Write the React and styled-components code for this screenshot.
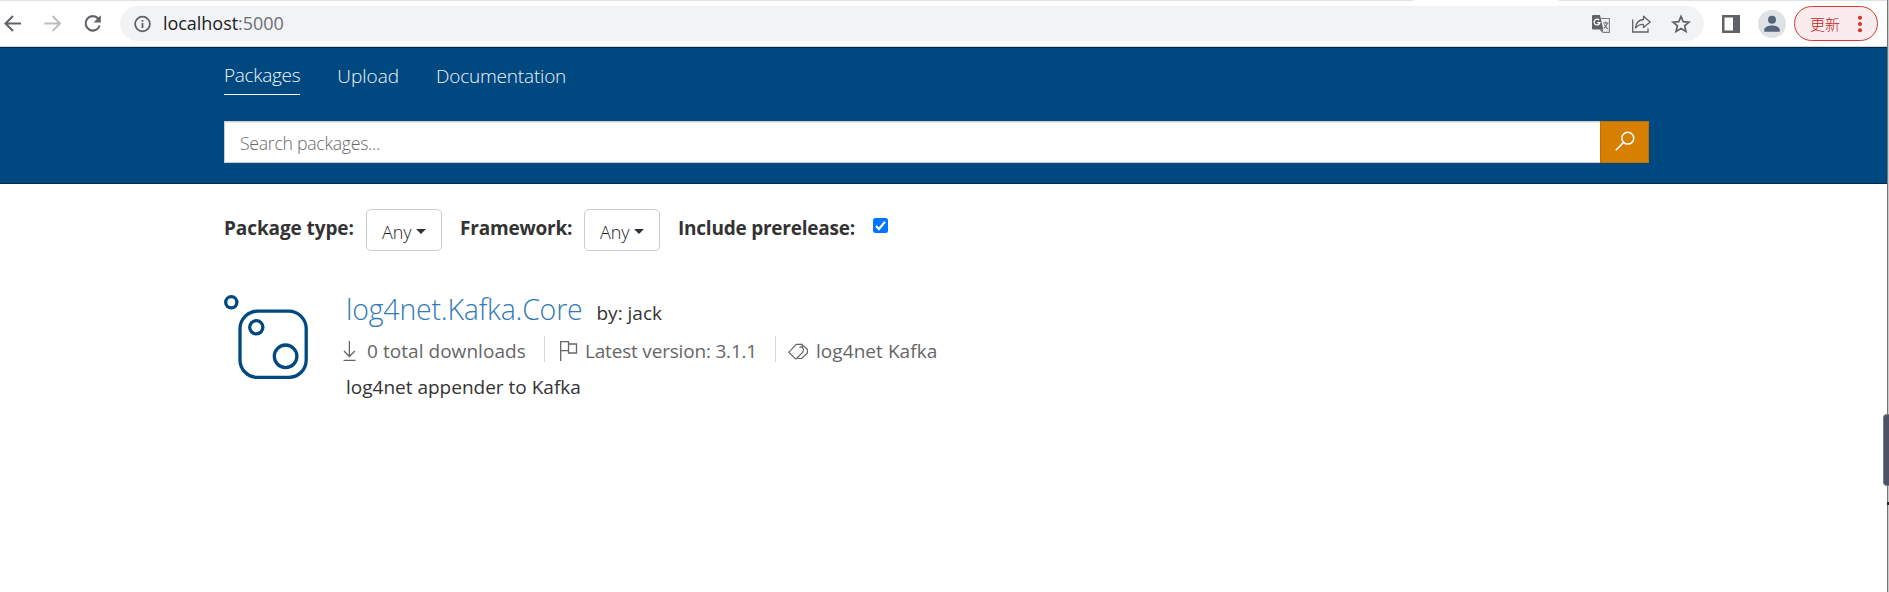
import React from 'react';
import styled, { createGlobalStyle } from 'styled-components';

const Global = createGlobalStyle`
  *, *::before, *::after { box-sizing: border-box; }
  html, body { margin: 0; padding: 0; background: #fff; }
  body { font-family: "Open Sans", "Noto Sans CJK SC", sans-serif; color: #333; overflow: hidden; }
  svg { display: block; flex: none; }
`;

const Window = styled.div`
  display: grid;
  grid-template-columns: 1fr 2px;
  width: 1889px;
  height: 592px;
`;
const View = styled.div`
  display: flex;
  flex-direction: column;
  min-width: 0;
`;
const Edge = styled.div`
  position: relative;
  background: #cacaca;
  border-left: 1px solid #747474;
`;
const Handle = styled.div`
  position: absolute;
  right: 0;
  top: 414px;
  width: 6px;
  height: 72px;
  border: 1px solid #777d88;
  border-right: 0;
  border-radius: 4px 0 0 4px;
  background: #4b5365;
`;
const Mark = styled.div`
  position: absolute;
  right: 0;
  top: 502px;
  width: 2px;
  height: 3px;
  background: #222;
`;

/* Browser chrome */
const TabStrip = styled.div`
  display: flex;
  justify-content: space-between;
  height: 1px;
`;
const TabEdge = styled.div`
  width: ${(p) => p.$width}px;
  background: #dee1e6;
`;
const Toolbar = styled.div`
  display: flex;
  align-items: center;
  height: 46px;
  padding: 0 9px 0 2px;
  border-bottom: 1px solid #d5d5d5;
`;
const NavButtons = styled.div`
  display: flex;
  gap: 20px;
  width: 118px;
`;
const AddressBar = styled.div`
  display: flex;
  align-items: center;
  width: 1584px;
  height: 35px;
  padding: 0 13px 0 12px;
  border-radius: 18px;
  background: #f1f3f4;
`;
const Url = styled.div`
  flex: 1;
  margin-left: 10px;
  font-size: 18px;
  line-height: 33px;
  padding-bottom: 1px;
  letter-spacing: -0.04px;
  color: #202124;
  span { color: #6b6f74; }
`;
const BarIcons = styled.div`
  display: flex;
  gap: 20px;
`;
const PanelButton = styled.div`
  margin-left: 18px;
`;
const Avatar = styled.div`
  margin-left: 18px;
  width: 28px;
  height: 28px;
  border-radius: 50%;
  background: #dee1e6;
`;
const UpdateButton = styled.div`
  display: flex;
  align-items: center;
  justify-content: space-between;
  width: 84px;
  height: 35px;
  margin-left: 8px;
  padding: 0 13px 0 15px;
  border: 1.5px solid #cf3a33;
  border-radius: 18px;
  background: #faecec;
  color: #c5221f;
  font: 300 15px/32px "Noto Sans CJK SC", sans-serif;
`;

/* Page header */
const Header = styled.header`
  height: 137px;
  padding: 9px 0 0 224px;
  background: #004880;
  border-top: 1px solid #002a4c;
  border-bottom: 1px solid #002a4c;
`;
const Menu = styled.nav`
  display: flex;
  gap: 37px;
  height: 38px;
`;
const MenuItem = styled.div`
  font-size: 19px;
  font-weight: 300;
  line-height: ${(p) => (p.$active ? 36 : 38)}px;
  height: 38px;
  letter-spacing: ${(p) => p.$tracking}px;
  color: #f0f5f9;
  border-bottom: 1px solid ${(p) => (p.$active ? '#fff' : 'transparent')};
`;
const SearchBar = styled.div`
  display: flex;
  width: 1425px;
  height: 42px;
  margin-top: 26px;
`;
const SearchField = styled.div`
  flex: 1;
  padding-left: 15px;
  background: #fff;
  border: 1px solid #ccc;
  border-right: 0;
  box-shadow: inset 0 1px 1px rgba(0, 0, 0, 0.08);
  font-size: 17.7px;
  font-weight: 300;
  line-height: 42px;
  letter-spacing: -0.29px;
  color: #6a6a6a;
`;
const SearchButton = styled.div`
  display: flex;
  align-items: center;
  justify-content: center;
  width: 49px;
  padding-bottom: 2px;
  background: #d67f00;
  border: 1px solid #bd7000;
`;

/* Filters */
const Filters = styled.div`
  display: flex;
  align-items: flex-start;
  height: 42px;
  margin: 25px 0 0 224px;
`;
const FilterLabel = styled.div`
  width: ${(p) => p.$width}px;
  font-size: 19px;
  font-weight: 700;
  line-height: 39px;
  letter-spacing: ${(p) => p.$tracking}px;
  white-space: nowrap;
`;
const Select = styled.div`
  display: flex;
  align-items: center;
  width: 76px;
  height: 42px;
  margin-right: 18px;
  padding: 3px 0 0 15px;
  border: 1px solid #ccc;
  border-radius: 5px;
  font-size: 18px;
  font-weight: 300;
  letter-spacing: -0.1px;
  color: #222;
`;
const Caret = styled.div`
  margin: 0 0 0 5px;
  border-top: 5px solid #333;
  border-left: 5px solid transparent;
  border-right: 5px solid transparent;
`;
const Checkbox = styled.div`
  display: flex;
  width: 15px;
  height: 15px;
  margin-top: 9px;
  border-radius: 2.5px;
  background: #0075ff;
`;

/* Package list */
const Package = styled.article`
  display: flex;
  margin: 38px 0 0 224px;
`;
const Logo = styled.div`
  width: 120px;
  padding-top: 6px;
`;
const Details = styled.div`
  display: flex;
  flex-direction: column;
`;
const TitleRow = styled.div`
  display: flex;
  align-items: baseline;
  height: 47px;
  padding-left: 2px;
  line-height: 40px;
`;
const Title = styled.div`
  font-size: 28.5px;
  font-weight: 300;
  letter-spacing: -0.2px;
  color: #337ab7;
`;
const Author = styled.div`
  margin-left: 14px;
  font-size: 19px;
`;
const Stats = styled.div`
  display: flex;
  height: 26px;
  margin-left: -2px;
`;
const Stat = styled.div`
  display: flex;
  height: 26px;
  width: ${(p) => p.$width}px;
  padding-left: ${(p) => p.$inset}px;
  border-right: ${(p) => (p.$last ? 0 : 1)}px solid #d8d8d8;
  overflow: hidden;
  font-size: 19px;
  line-height: 31px;
  letter-spacing: ${(p) => p.$tracking}px;
  color: #666;
  white-space: nowrap;
`;
const StatIcon = styled.div`
  width: ${(p) => p.$width}px;
  padding-top: 5px;
`;
const Description = styled.div`
  margin-top: 11px;
  padding-left: 2px;
  font-size: 19px;
  line-height: 29px;
`;

const BackIcon = ({ color, flip }) => (
  <svg width="20" height="20" viewBox="0 0 20 20" fill="none" stroke={color} strokeWidth="2">
    <path d={flip ? 'M2.5 9.5H17.5M10.5 2L18 9.5L10.5 17' : 'M19 9.5H4M11 2L3.5 9.5L11 17'} />
  </svg>
);
const ReloadIcon = () => (
  <svg width="22" height="20" viewBox="0 0 22 20">
    <path d="M16.3 4.7A7.2 7.2 0 1 0 17.7 11.5" fill="none" stroke="#5f6368" strokeWidth="2.1" />
    <path d="M18.8 1.3V8.5H11.6Z" fill="#5f6368" />
  </svg>
);
const InfoIcon = () => (
  <svg width="21" height="20" viewBox="0 0 21 20">
    <circle cx="10.5" cy="10" r="7.4" fill="none" stroke="#5f6368" strokeWidth="1.8" />
    <path d="M9.6 9H11.4V14H9.6ZM9.6 6H11.4V7.8H9.6Z" fill="#5f6368" />
  </svg>
);
const TranslateIcon = () => (
  <svg width="20" height="20" viewBox="0 0 20 20" fill="none">
    <path d="M10 4.5H18.4V18.4H11.5" stroke="#7a7e82" strokeWidth="1.1" />
    <path d="M2 1H9L12.3 15.4H2Q1 15.4 1 14.4V2Q1 1 2 1Z" fill="#5f6368" />
    <path d="M8.6 15.4H12.3L11.3 18.6Z" fill="#5f6368" />
    <path d="M8.2 6.1A2.9 2.9 0 1 0 8.9 8.6H6.3" stroke="#fff" strokeWidth="1.3" />
    <path d="M12 9H17.5M14.7 7.5V9M16.5 9Q15.5 12.5 12.7 14.3M13.2 10.5Q14.5 13 17 15" stroke="#6d7175" strokeWidth="1.1" />
  </svg>
);
const ShareIcon = () => (
  <svg width="20" height="20" viewBox="0 0 20 20" fill="none" stroke="#5f6368" strokeWidth="1.3">
    <path d="M1.7 5.5V18H17V14.5" />
    <path d="M12.5 2.2L19.2 8L12.5 13.5V10.3Q7.5 10 4.5 14Q5.3 6 12.5 5.5Z" strokeLinejoin="round" />
  </svg>
);
const StarIcon = () => (
  <svg width="20" height="20" viewBox="0 0 20 20" fill="none" stroke="#5f6368" strokeWidth="1.7">
    <path d="M10 2.4L12.2 7.6L18 8.1L13.6 11.8L15 17.4L10 14.4L5 17.4L6.4 11.8L2 8.1L7.8 7.6Z" />
  </svg>
);
const PanelIcon = () => (
  <svg width="18" height="18" viewBox="0 0 18 18">
    <path d="M0 0H18V18H0ZM2.5 2.5V15.5H11V2.5Z" fill="#5f6368" fillRule="evenodd" />
  </svg>
);
const PersonIcon = () => (
  <svg width="28" height="28" viewBox="0 0 28 28" fill="#54657a">
    <circle cx="14" cy="9.7" r="4" />
    <path d="M6.3 21.8V19.8C6.3 17 11 15.6 14 15.6S21.7 17 21.7 19.8V21.8Z" />
  </svg>
);
const DotsIcon = () => (
  <svg width="8" height="18" viewBox="0 0 8 18" fill="#d93025">
    <circle cx="4" cy="2.8" r="2.05" />
    <circle cx="4" cy="9" r="2.05" />
    <circle cx="4" cy="15.2" r="2.05" />
  </svg>
);
const SearchIcon = () => (
  <svg width="20" height="20" viewBox="0 0 20 20" fill="none" stroke="#fff" strokeWidth="1.5">
    <circle cx="12.8" cy="7.2" r="5.9" />
    <path d="M8.6 11.4L0.8 19.2" />
  </svg>
);
const CheckIcon = () => (
  <svg width="15" height="15" viewBox="0 0 15 15" fill="none" stroke="#fff" strokeWidth="2.2">
    <path d="M3 8L6 11L12 3.8" />
  </svg>
);
const PackageIcon = () => (
  <svg width="84" height="84" viewBox="0 0 84 84" fill="none" stroke="#004880" strokeWidth="3.3">
    <circle cx="7.3" cy="7.3" r="5.6" />
    <rect x="16" y="16.2" width="66.2" height="66.2" rx="17.5" />
    <circle cx="32.3" cy="32.3" r="6.6" />
    <circle cx="61.6" cy="61.3" r="11.3" />
  </svg>
);
const DownloadIcon = () => (
  <svg width="13" height="20" viewBox="0 0 13 20" fill="none" stroke="#666" strokeWidth="1.3">
    <path d="M6.4 0V15.5M1 10L6.4 15.5L11.8 10M0.5 19.3H12.5" />
  </svg>
);
const FlagIcon = () => (
  <svg width="18" height="20" viewBox="0 0 18 20" fill="none" stroke="#666" strokeWidth="1.3">
    <path d="M0.7 20V0.7H8.5V9.7H0.7M8.5 3H16.5V12H8.5V9.7" />
  </svg>
);
const TagIcon = () => (
  <svg width="21" height="20" viewBox="0 0 21 20" fill="none" stroke="#666" strokeWidth="1.2">
    <path d="M7.7 18.2L0.9 11.2L8.3 3.4H14.2V6.2" />
    <path d="M7.7 18.2L14.6 11.4Q16.4 8.6 14.2 6.2Q12.6 5.2 11.6 7" />
    <path d="M14.2 3.6L19.4 8.6V12L13.6 17.5H9.5" />
  </svg>
);

export default function App() {
  return (
    <Window>
      <Global />
      <View>
        <TabStrip>
          <TabEdge $width={1413} />
          <TabEdge $width={328} />
        </TabStrip>
        <Toolbar>
          <NavButtons>
            <BackIcon color="#5f6368" />
            <BackIcon color="#babcbe" flip />
            <ReloadIcon />
          </NavButtons>
          <AddressBar>
            <InfoIcon />
            <Url>localhost<span>:5000</span></Url>
            <BarIcons>
              <TranslateIcon />
              <ShareIcon />
              <StarIcon />
            </BarIcons>
          </AddressBar>
          <PanelButton><PanelIcon /></PanelButton>
          <Avatar><PersonIcon /></Avatar>
          <UpdateButton>更新<DotsIcon /></UpdateButton>
        </Toolbar>
        <Header>
          <Menu>
            <MenuItem $active $tracking={-0.3}>Packages</MenuItem>
            <MenuItem $tracking={0}>Upload</MenuItem>
            <MenuItem $tracking={-0.2}>Documentation</MenuItem>
          </Menu>
          <SearchBar>
            <SearchField>Search packages...</SearchField>
            <SearchButton><SearchIcon /></SearchButton>
          </SearchBar>
        </Header>
        <Filters>
          <FilterLabel $width={142} $tracking={-0.1}>Package type:</FilterLabel>
          <Select>Any<Caret /></Select>
          <FilterLabel $width={124} $tracking={-0.2}>Framework:</FilterLabel>
          <Select>Any<Caret /></Select>
          <FilterLabel $width={195} $tracking={-0.23}>Include prerelease:</FilterLabel>
          <Checkbox><CheckIcon /></Checkbox>
        </Filters>
        <Package>
          <Logo><PackageIcon /></Logo>
          <Details>
            <TitleRow>
              <Title>log4net.Kafka.Core</Title>
              <Author>by: jack</Author>
            </TitleRow>
            <Stats>
              <Stat $width={203} $inset={1} $tracking={0.05}>
                <StatIcon $width={24}><DownloadIcon /></StatIcon>0 total downloads
              </Stat>
              <Stat $width={231} $inset={15} $tracking={-0.19}>
                <StatIcon $width={25}><FlagIcon /></StatIcon>Latest version: 3.1.1
              </Stat>
              <Stat $width={190} $inset={12} $tracking={0.06} $last>
                <StatIcon $width={28}><TagIcon /></StatIcon>log4net Kafka
              </Stat>
            </Stats>
            <Description>log4net appender to Kafka</Description>
          </Details>
        </Package>
      </View>
      <Edge>
        <Handle />
        <Mark />
      </Edge>
    </Window>
  );
}
